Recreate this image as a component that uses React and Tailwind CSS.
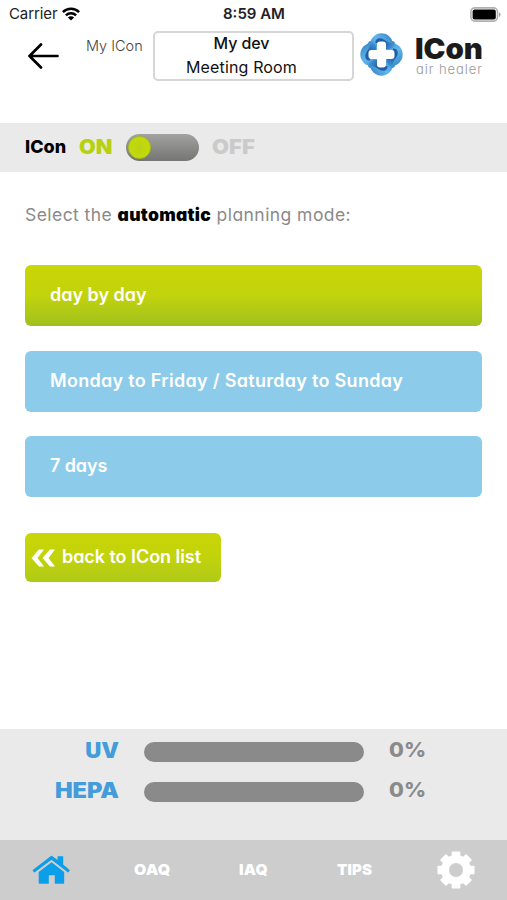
import React from "react";

function Wifi() {
  return (
    <svg className="ml-[5px] h-[14px] w-[18px]" viewBox="0 0 18 14" fill="none" stroke="#000" strokeWidth="2.5">
      <path d="M.9 5.1a11.6 11.6 0 0 1 16.2 0" />
      <path d="M3.9 8.4a7.3 7.3 0 0 1 10.2 0" />
      <path d="M9 13.6 5.9 10.5a4.4 4.4 0 0 1 6.2 0z" fill="#000" stroke="none" />
    </svg>
  );
}

function Battery() {
  return (
    <svg className="h-[15px] w-[31px]" viewBox="0 0 31 15">
      <rect x=".9" y=".9" width="26.6" height="13.2" rx="4" fill="#fff" stroke="#b0b0b0" strokeWidth="1.6" />
      <rect x="2.6" y="2.6" width="23.2" height="9.8" rx="2" fill="#000" />
      <path d="M29 5.2c2 .8 2 3.8 0 4.6z" fill="#a3a3a3" />
    </svg>
  );
}

function Logo() {
  const quarters = [0, 90, 180, 270];
  return (
    <svg className="h-[43px] w-[43px]" viewBox="0 0 43 43">
      <defs>
        <linearGradient id="petal" gradientUnits="userSpaceOnUse" x1="10" y1="16" x2="31" y2="3">
          <stop offset="0" stopColor="#3f93d4" />
          <stop offset=".45" stopColor="#62b8e8" />
          <stop offset="1" stopColor="#3b8acb" />
        </linearGradient>
        <linearGradient id="fold" gradientUnits="userSpaceOnUse" x1="16" y1="5" x2="33" y2="14">
          <stop offset="0" stopColor="#2461ae" />
          <stop offset=".45" stopColor="#1f58a6" />
          <stop offset="1" stopColor="#4397d6" />
        </linearGradient>
      </defs>
      <rect x="8" y="8" width="27" height="27" rx="3" fill="#3d8ccf" />
      {quarters.map((angle) => (
        <circle key={angle} cx="21.500" cy="11.800" r="11.500" fill="url(#petal)" transform={`rotate(${angle} 21.500 21.500)`} />
      ))}
      {quarters.map((angle) => (
        <path
          key={angle}
          d="M15.500 10C15 6.500 18 4.500 21.500 5.500 26 7 27.500 10.500 34.500 10.500 34 14 31 17 26 16L24 10z"
          fill="url(#fold)"
          transform={`rotate(${angle} 21.500 21.500)`}
        />
      ))}
      <path
        d="M20 8.500h3a3 3 0 0 1 3 3V17h5.500a3 3 0 0 1 3 3v3a3 3 0 0 1-3 3H26v5.500a3 3 0 0 1-3 3h-3a3 3 0 0 1-3-3V26h-5.500a3 3 0 0 1-3-3v-3a3 3 0 0 1 3-3H17v-5.500a3 3 0 0 1 3-3z"
        fill="#fff"
      />
    </svg>
  );
}

function Home() {
  return (
    <svg className="h-[30px] w-[38px]" viewBox="0 0 38 30" fill="#0a9fe8">
      <path d="M.8 15 18.900.900q.600-.400 1.200 0L25.600 5V1.200h5.600v8.200L37.600 15q.300.300 0 .700l-1.200 1.600q-.300.300-.700 0L19.500 4.800 2.800 17.300q-.400.300-.700 0L.8 15.700q-.300-.400 0-.700z" />
      <path d="M19.500 7.300 32.200 17v11q0 .700-.700.700h-8.700v-8.500h-6v8.500H7.400q-.700 0-.700-.700V17z" />
    </svg>
  );
}

function Gear() {
  return (
    <svg className="h-[38px] w-[38px]" viewBox="-19 -19 38 38">
      {[0, 45, 90, 135].map((angle) => (
        <rect key={angle} x="-4.300" y="-18.500" width="8.600" height="37" rx=".8" fill="#fff" transform={`rotate(${angle})`} />
      ))}
      <circle r="15" fill="#fff" />
      <circle r="7" fill="#cdcdcd" />
    </svg>
  );
}

function Mode({ label, spacing, active }) {
  return (
    <button
      className={`flex h-[61px] w-full items-center rounded-[6px] pb-[2px] pl-[25px] text-left text-[18px] font-semibold text-white ${spacing} ${
        active ? "bg-linear-to-b from-[#c9d607] from-0% via-[#c2d30b] via-50% to-[#9fc11c]" : "bg-[#8dcbea]"
      }`}
    >
      {label}
    </button>
  );
}

function Meter({ label, stretch }) {
  return (
    <div className="flex h-10 items-center">
      <span className={`w-[119px] origin-right pb-[3px] text-right text-[21px] font-black text-[#449cda] ${stretch}`}>{label}</span>
      <span className="ml-[25px] h-5 w-[220px] rounded-full bg-[#8a8a8a]" />
      <span className="ml-[25px] origin-left scale-x-[1.05] pb-[3px] text-[20.5px] font-extrabold text-[#8a8a8a]">0%</span>
    </div>
  );
}

export default function App() {
  return (
    <div className="flex h-[900px] w-[507px] flex-col overflow-hidden bg-white font-['Inter','Liberation_Sans',sans-serif] whitespace-nowrap [font-feature-settings:'cv11']">
      <div className="grid h-7 shrink-0 grid-cols-3 items-center pr-[6px] pl-[9px] text-[15px] text-[#222] [font-feature-settings:normal]">
        <span className="flex items-center tracking-[-0.1px]">
          Carrier
          <Wifi />
        </span>
        <span className="-ml-[2px] text-center font-semibold">8:59 AM</span>
        <span className="flex justify-end">
          <Battery />
        </span>
      </div>

      <header className="flex h-[95px] shrink-0 items-start pt-[3px]">
        <svg className="mt-[12px] ml-[28px] h-[26px] w-[32px]" viewBox="0 0 32 26" fill="none" stroke="#000" strokeWidth="2.700" strokeLinecap="round" strokeLinejoin="round">
          <path d="M29.500 13H1.500M13 1.500 1.500 13 13 24.500" />
        </svg>
        <span className="mt-[5px] ml-[26px] w-[67px] text-[14.5px] leading-5 font-light text-[#444]">My ICon</span>
        <div className="flex h-[50px] w-[201px] flex-col items-center rounded-[5px] border-2 border-[#d6d6d6] pr-[24px] text-[16px] leading-6 text-[#111]">
          <span className="-mt-[2px] font-medium tracking-[-0.1px]">My dev</span>
          <span className="tracking-[0.15px]">Meeting Room</span>
        </div>
        <div className="mt-[2px] ml-[6px]">
          <Logo />
        </div>
        <div className="ml-[12px] flex flex-col">
          <span className="mt-[4px] origin-left scale-x-[1.03] text-[28.5px] leading-[28px] font-black text-[#1b1b1b]">ICon</span>
          <span className="-mt-[1px] ml-[1px] text-[13px] leading-[14px] font-light tracking-[0.95px] text-[#999]">air healer</span>
        </div>
      </header>

      <div className="flex h-[49px] shrink-0 items-center bg-[#eaeaea] pb-[2px] pl-[25px]">
        <span className="w-[54px] text-[18px] font-extrabold text-black">ICon</span>
        <span className="w-[47px] origin-left scale-x-[1.08] text-[20px] font-black text-[#b6d20f]">ON</span>
        <span className="mt-[2px] flex h-[27px] w-[73px] items-center rounded-full bg-linear-to-b from-[#a2a2a0] to-[#757573] pl-[2px]">
          <span className="h-[23px] w-[23px] rounded-full border border-[#a5c414] bg-radial from-[#b6d414] to-[#cddc00]" />
        </span>
        <span className="ml-[13px] origin-left scale-x-[1.1] text-[20px] font-black text-[#cacaca]">OFF</span>
      </div>

      <main className="flex grow flex-col px-[25px] pt-[30px]">
        <p className="h-[26px] text-[17.5px] leading-[26px] tracking-[0.44px] text-[#8a8a8a]">
          Select the <b className="font-black tracking-[0.3px] text-black">automatic</b> planning mode:
        </p>
        <div className="mt-[37px] flex flex-col gap-[24.500px]">
          <Mode label="day by day" spacing="tracking-normal" active />
          <Mode label="Monday to Friday / Saturday to Sunday" spacing="tracking-[0.3px]" />
          <Mode label="7 days" spacing="tracking-[-0.1px]" />
        </div>
        <button className="mt-[36px] flex h-[49px] w-[196px] items-center rounded-[6px] bg-linear-to-b from-[#c9d607] via-[#c2d30b] to-[#afca17] pl-[6px] text-[18px] font-semibold text-white">
          <svg className="h-[18px] w-[25px]" viewBox="0 0 25 18" fill="#fff">
            <path d="M8 .5h5L6.500 9l6.500 8.500H8L.5 9zM19 .5h5L17.500 9l6.500 8.500h-5L11.500 9z" />
          </svg>
          <span className="ml-[6px] pb-[2px] tracking-[-0.05px]">back to ICon list</span>
        </button>
      </main>

      <section className="h-[111px] shrink-0 bg-[#eaeaea] pt-[3px]">
        <Meter label="UV" stretch="scale-x-[1.06]" />
        <Meter label="HEPA" stretch="scale-x-[1.12]" />
      </section>

      <nav className="flex h-[60px] shrink-0 items-center bg-[#cdcdcd] pl-8 text-[15px] font-black tracking-[0.2px] text-white">
        <Home />
        <span className="ml-[64px] w-[105px] origin-left scale-x-[1.06]">OAQ</span>
        <span className="w-[98px] origin-left scale-x-[1.03]">IAQ</span>
        <span className="w-[100px]">TIPS</span>
        <Gear />
      </nav>
    </div>
  );
}
